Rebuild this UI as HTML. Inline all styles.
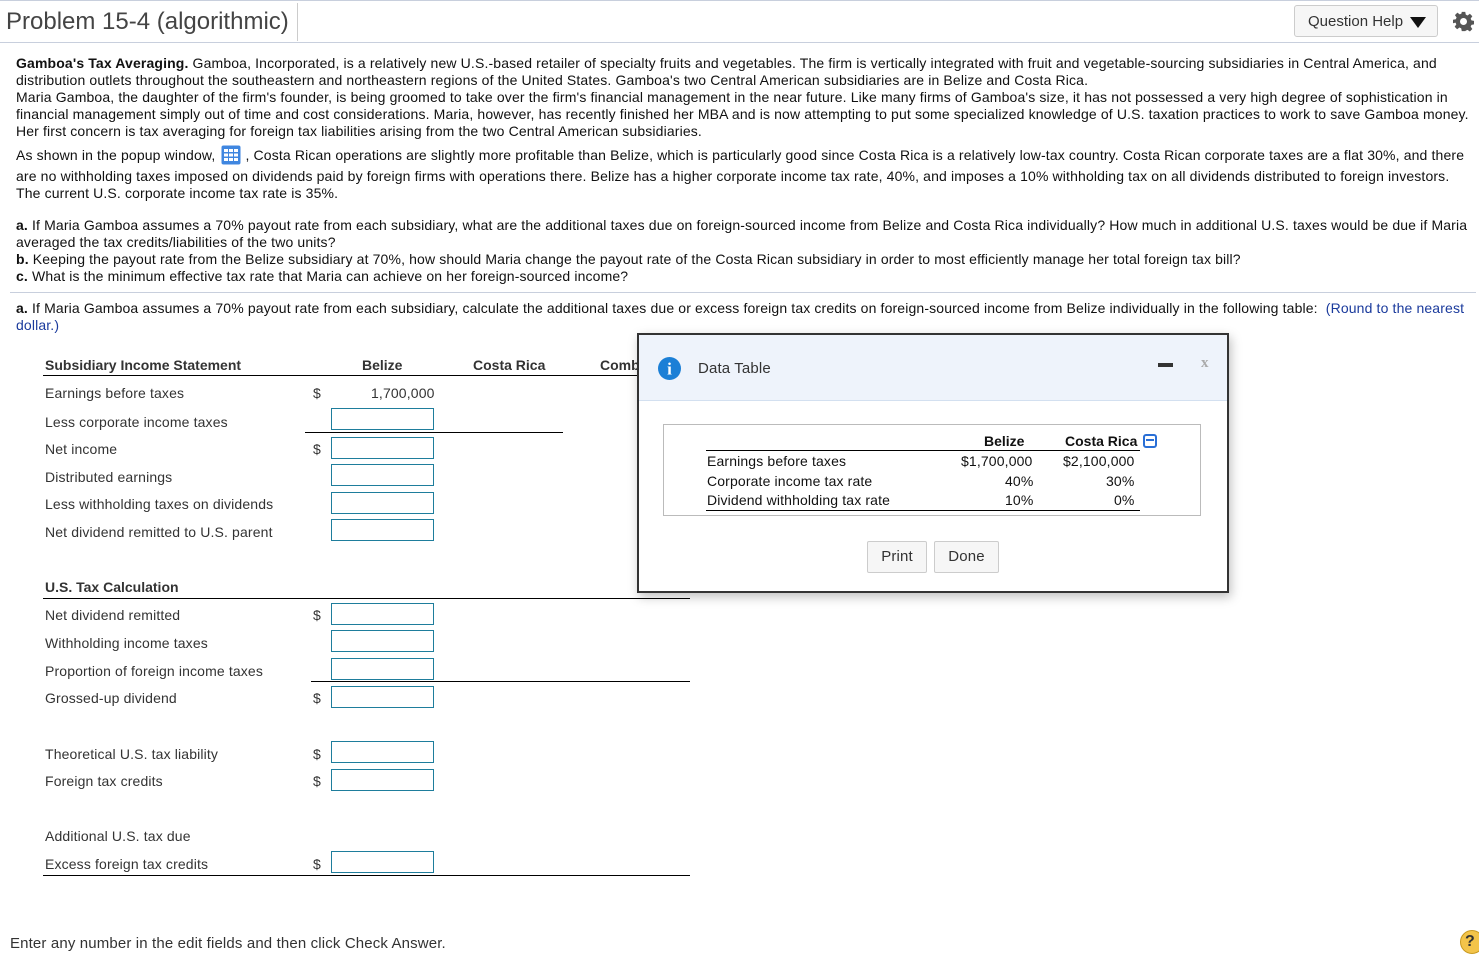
<!DOCTYPE html>
<html><head><meta charset="utf-8"><style>
body{margin:0;width:1479px;height:953px;position:relative;overflow:hidden;background:#fff;font-family:"Liberation Sans",Arial,sans-serif;color:#111;letter-spacing:0.14px}
.t{position:absolute;white-space:nowrap;font-size:14px;line-height:16px}
.l{position:absolute;white-space:nowrap;font-size:14px;line-height:16px;color:#333}
.h{position:absolute;white-space:nowrap;font-size:14px;line-height:16px;color:#333;font-weight:bold;letter-spacing:0}
.in{position:absolute;left:331px;width:101px;height:20px;border:1px solid #1e7d9c;background:#fff}
.d{position:absolute;left:313px;font-size:14px;line-height:16px;color:#333}
.hr{position:absolute;height:1px;background:#000}
</style></head><body>
<div style="position:absolute;left:0;top:0;width:1479px;height:1px;background:#c8cfdd"></div>
<div style="position:absolute;left:0;top:42px;width:1479px;height:1px;background:#c8cfdd"></div>
<div style="position:absolute;left:297px;top:3px;width:1px;height:38px;background:#ccc"></div>
<div class="t" style="left:6px;top:8px;font-size:24px;line-height:28px;color:#444;letter-spacing:0">Problem 15-4 (algorithmic)</div>
<div style="position:absolute;left:1294px;top:5px;width:144px;height:32px;border:1px solid #ccc;border-radius:3px;background:#f6f6f6;box-sizing:border-box"></div>
<div class="t" style="left:1308px;top:14px;font-size:15px;color:#333;letter-spacing:0">Question Help</div>
<svg style="position:absolute;left:1410px;top:17px" width="16" height="11"><path d="M0 0H16L8 11Z" fill="#111"/></svg>
<svg style="position:absolute;left:1453px;top:11px" width="21" height="21" viewBox="0 0 24 24"><path fill="#555" d="M10 1h4l.6 3.2 2 .9 2.7-1.9 2.8 2.8-1.9 2.7.9 2 3.2.6v4l-3.2.6-.9 2 1.9 2.7-2.8 2.8-2.7-1.9-2 .9L14 23h-4l-.6-3.2-2-.9-2.7 1.9-2.8-2.8 1.9-2.7-.9-2L0 14v-4l3.2-.6.9-2L2.2 4.7 5 1.9l2.7 1.9 2-.9z M12 8a4 4 0 1 0 0 8a4 4 0 1 0 0-8z" fill-rule="evenodd"/></svg>

<div class="t" style="left:16px;top:55px"><b>Gamboa's Tax Averaging.</b> Gamboa, Incorporated, is a relatively new U.S.-based retailer of specialty fruits and vegetables. The firm is vertically integrated with fruit and vegetable-sourcing subsidiaries in Central America, and</div>
<div class="t" style="left:16px;top:72px">distribution outlets throughout the southeastern and northeastern regions of the United States. Gamboa's two Central American subsidiaries are in Belize and Costa Rica.</div>
<div class="t" style="left:16px;top:89px">Maria Gamboa, the daughter of the firm's founder, is being groomed to take over the firm's financial management in the near future. Like many firms of Gamboa's size, it has not possessed a very high degree of sophistication in</div>
<div class="t" style="left:16px;top:106px">financial management simply out of time and cost considerations. Maria, however, has recently finished her MBA and is now attempting to put some specialized knowledge of U.S. taxation practices to work to save Gamboa money.</div>
<div class="t" style="left:16px;top:123px">Her first concern is tax averaging for foreign tax liabilities arising from the two Central American subsidiaries.</div>
<div class="t" style="left:16px;top:145px">As shown in the popup window, <span style="display:inline-block;width:20px;height:20px;vertical-align:-5px;margin:0 4px 0 2px"><svg width="20" height="20"><rect x="0.5" y="0.5" width="19" height="19" rx="2" fill="#3f86e0"/><g fill="#fff"><rect x="3" y="4" width="4" height="3"/><rect x="8" y="4" width="4" height="3"/><rect x="13" y="4" width="4" height="3"/><rect x="3" y="8.5" width="4" height="3"/><rect x="8" y="8.5" width="4" height="3"/><rect x="13" y="8.5" width="4" height="3"/><rect x="3" y="13" width="4" height="3"/><rect x="8" y="13" width="4" height="3"/><rect x="13" y="13" width="4" height="3"/></g></svg></span>, Costa Rican operations are slightly more profitable than Belize, which is particularly good since Costa Rica is a relatively low-tax country. Costa Rican corporate taxes are a flat 30%, and there</div>
<div class="t" style="left:16px;top:168px">are no withholding taxes imposed on dividends paid by foreign firms with operations there. Belize has a higher corporate income tax rate, 40%, and imposes a 10% withholding tax on all dividends distributed to foreign investors.</div>
<div class="t" style="left:16px;top:185px">The current U.S. corporate income tax rate is 35%.</div>

<div class="t" style="left:16px;top:217px"><b>a.</b> If Maria Gamboa assumes a 70% payout rate from each subsidiary, what are the additional taxes due on foreign-sourced income from Belize and Costa Rica individually? How much in additional U.S. taxes would be due if Maria</div>
<div class="t" style="left:16px;top:234px">averaged the tax credits/liabilities of the two units?</div>
<div class="t" style="left:16px;top:251px"><b>b.</b> Keeping the payout rate from the Belize subsidiary at 70%, how should Maria change the payout rate of the Costa Rican subsidiary in order to most efficiently manage her total foreign tax bill?</div>
<div class="t" style="left:16px;top:268px"><b>c.</b> What is the minimum effective tax rate that Maria can achieve on her foreign-sourced income?</div>
<div style="position:absolute;left:10px;top:292px;width:1466px;height:1px;background:#c8cfdd"></div>
<div class="t" style="left:16px;top:300px"><b>a.</b> If Maria Gamboa assumes a 70% payout rate from each subsidiary, calculate the additional taxes due or excess foreign tax credits on foreign-sourced income from Belize individually in the following table: <span style="color:#1a3a9c">&nbsp;(Round to the nearest</span></div>
<div class="t" style="left:16px;top:317px;color:#1a3a9c">dollar.)</div>

<div class="h" style="left:45px;top:357px">Subsidiary Income Statement</div>
<div class="h" style="left:362px;top:357px">Belize</div>
<div class="h" style="left:473px;top:357px">Costa Rica</div>
<div class="h" style="left:600px;top:357px">Comb</div>
<div class="hr" style="left:43px;top:375px;width:600px"></div>
<div class="l" style="left:45px;top:385px">Earnings before taxes</div><div class="d" style="top:385px">$</div>
<div class="l" style="left:371px;top:385px">1,700,000</div>
<div class="l" style="left:45px;top:414px">Less corporate income taxes</div><div class="in" style="top:408px"></div>
<div class="hr" style="left:305px;top:432px;width:258px"></div>
<div class="l" style="left:45px;top:441px">Net income</div><div class="d" style="top:441px">$</div><div class="in" style="top:437px"></div>
<div class="l" style="left:45px;top:469px">Distributed earnings</div><div class="in" style="top:464px"></div>
<div class="l" style="left:45px;top:496px">Less withholding taxes on dividends</div><div class="in" style="top:492px"></div>
<div class="l" style="left:45px;top:524px">Net dividend remitted to U.S. parent</div><div class="in" style="top:519px"></div>

<div class="h" style="left:45px;top:579px">U.S. Tax Calculation</div>
<div class="hr" style="left:43px;top:598px;width:647px"></div>
<div class="l" style="left:45px;top:607px">Net dividend remitted</div><div class="d" style="top:607px">$</div><div class="in" style="top:603px"></div>
<div class="l" style="left:45px;top:635px">Withholding income taxes</div><div class="in" style="top:630px"></div>
<div class="l" style="left:45px;top:663px">Proportion of foreign income taxes</div><div class="in" style="top:658px"></div>
<div class="hr" style="left:311px;top:681px;width:379px"></div>
<div class="l" style="left:45px;top:690px">Grossed-up dividend</div><div class="d" style="top:690px">$</div><div class="in" style="top:686px"></div>
<div class="l" style="left:45px;top:746px">Theoretical U.S. tax liability</div><div class="d" style="top:746px">$</div><div class="in" style="top:741px"></div>
<div class="l" style="left:45px;top:773px">Foreign tax credits</div><div class="d" style="top:773px">$</div><div class="in" style="top:769px"></div>
<div class="l" style="left:45px;top:828px">Additional U.S. tax due</div>
<div class="l" style="left:45px;top:856px">Excess foreign tax credits</div><div class="d" style="top:856px">$</div><div class="in" style="top:851px"></div>
<div class="hr" style="left:43px;top:875px;width:647px"></div>

<div class="t" style="left:10px;top:935px;font-size:15px;line-height:17px;color:#333">Enter any number in the edit fields and then click Check Answer.</div>
<div style="position:absolute;left:1460px;top:930px;width:24px;height:24px;border-radius:50%;background:#f3c44a;border:1px solid #c99a20;box-sizing:border-box;font-weight:bold;font-size:16px;line-height:22px;text-align:center;color:#333;padding-right:4px">?</div>

<div style="position:absolute;left:637px;top:333px;width:592px;height:260px;border:2px solid #333;box-sizing:border-box;background:#fff;box-shadow:2px 4px 10px rgba(0,0,0,.25)">
 <div style="position:absolute;left:0;top:0;width:588px;height:65px;background:#eef3fb;border-bottom:1px solid #d3e0f0"></div>
 <svg style="position:absolute;left:19px;top:22px" width="23" height="23"><circle cx="11.5" cy="11.5" r="11.5" fill="#1b7fd6"/><text x="11.5" y="17.5" text-anchor="middle" fill="#fff" font-family="Liberation Serif,serif" font-weight="bold" font-size="17">i</text></svg>
 <div class="t" style="left:59px;top:25px;font-size:15px;line-height:18px;color:#333">Data Table</div>
 <div style="position:absolute;left:519px;top:28px;width:15px;height:4px;background:#333"></div>
 <div class="t" style="left:562px;top:20px;font-size:15px;color:#aaa;font-family:'Liberation Serif',serif;font-weight:bold">x</div>
 <div style="position:absolute;left:24px;top:89px;width:538px;height:92px;border:1px solid #bbb;box-sizing:border-box"></div>
 <div class="h" style="left:345px;top:98px;color:#111">Belize</div>
 <div class="h" style="left:426px;top:98px;color:#111">Costa Rica</div>
 <svg style="position:absolute;left:504px;top:99px" width="14" height="14"><rect x="1" y="1" width="12" height="12" rx="2" fill="#fff" stroke="#2a6fd6" stroke-width="2"/><rect x="3" y="5" width="8" height="2" fill="#2a6fd6"/></svg>
 <div class="hr" style="left:67px;top:115px;width:434px"></div>
 <div class="t" style="left:68px;top:118px">Earnings before taxes</div>
 <div class="t" style="left:322px;top:118px">$1,700,000</div>
 <div class="t" style="left:424px;top:118px">$2,100,000</div>
 <div class="t" style="left:68px;top:138px">Corporate income tax rate</div>
 <div class="t" style="left:366px;top:138px">40%</div>
 <div class="t" style="left:467px;top:138px">30%</div>
 <div class="t" style="left:68px;top:157px">Dividend withholding tax rate</div>
 <div class="t" style="left:366px;top:157px">10%</div>
 <div class="t" style="left:475px;top:157px">0%</div>
 <div class="hr" style="left:67px;top:175px;width:434px"></div>
 <div style="position:absolute;left:228px;top:206px;width:60px;height:32px;border:1px solid #ccc;border-radius:2px;background:#f6f6f6;box-sizing:border-box;text-align:center;line-height:30px;font-size:15px;color:#333">Print</div>
 <div style="position:absolute;left:295px;top:206px;width:65px;height:32px;border:1px solid #ccc;border-radius:2px;background:#f6f6f6;box-sizing:border-box;text-align:center;line-height:30px;font-size:15px;color:#333">Done</div>
</div>
</body></html>
